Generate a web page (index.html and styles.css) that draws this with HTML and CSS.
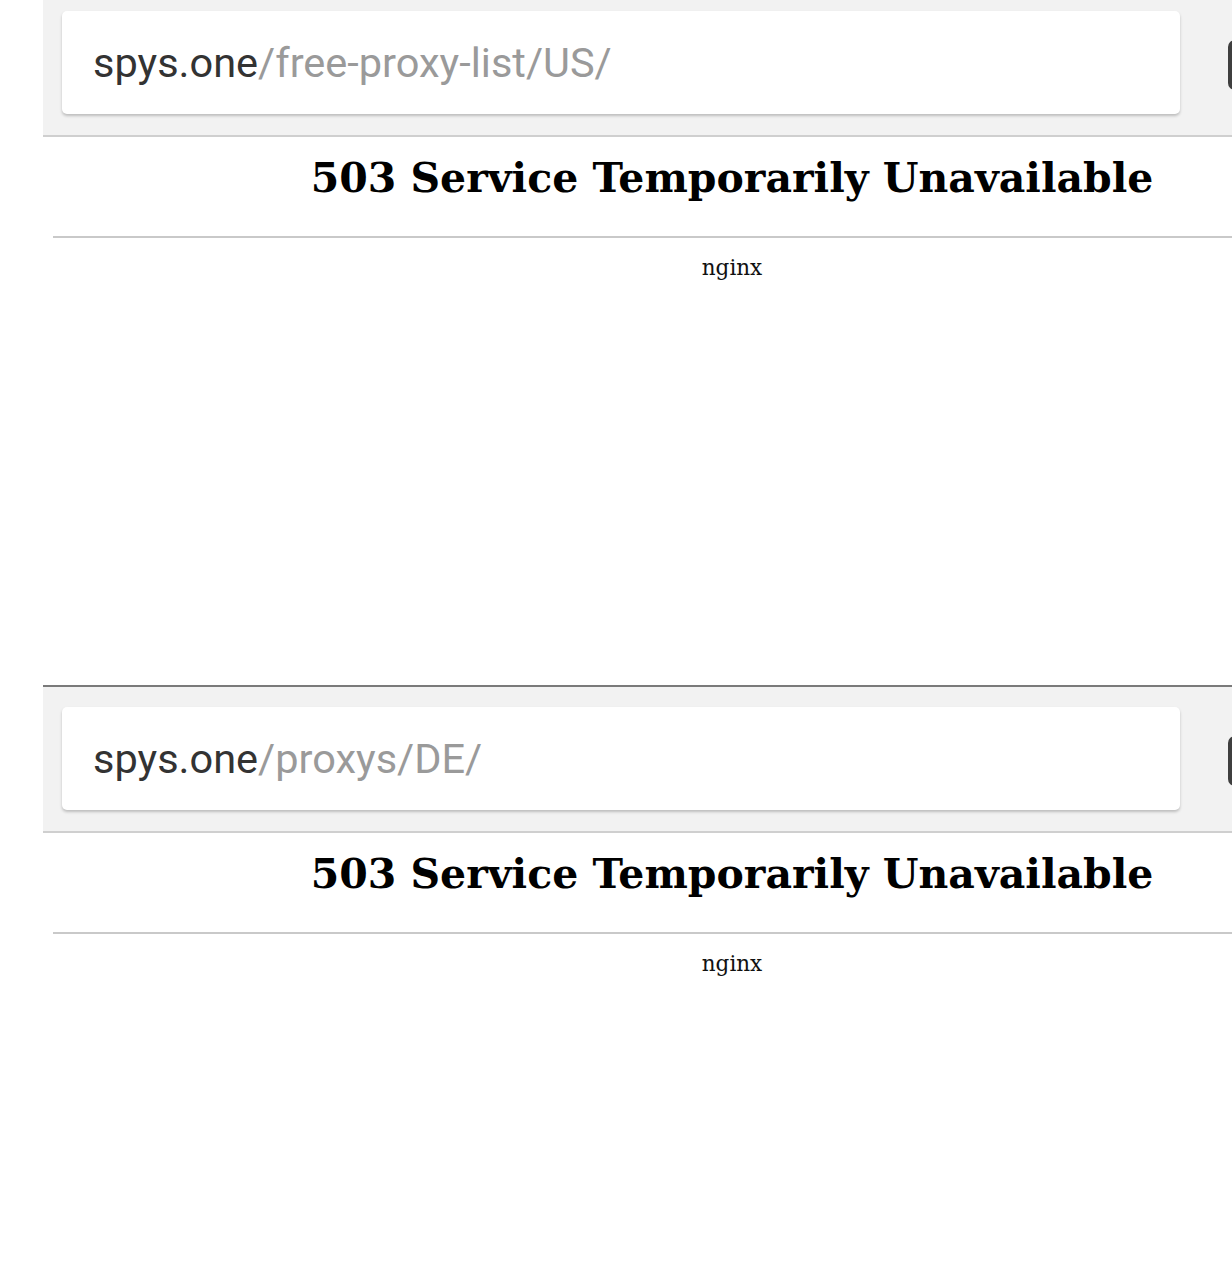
FILE: index.html
```html
<!DOCTYPE html>
<html>
<head>
<meta charset="utf-8">
<link rel="stylesheet" href="styles.css">
</head>
<body>
  <section class="shot shot-first">
    <div class="bar">
      <div class="omnibox"><span class="host">spys.one</span><span class="path">/free-proxy-list/US/</span></div>
      <div class="tabs"></div>
    </div>
    <div class="page">
      <h1 class="title">503 Service Temporarily Unavailable</h1>
      <hr class="rule">
      <p class="server">nginx</p>
    </div>
  </section>
  <section class="shot shot-second">
    <div class="bar">
      <div class="omnibox"><span class="host">spys.one</span><span class="path">/proxys/DE/</span></div>
      <div class="tabs"></div>
    </div>
    <div class="page">
      <h1 class="title">503 Service Temporarily Unavailable</h1>
      <hr class="rule">
      <p class="server">nginx</p>
    </div>
  </section>
</body>
</html>
```
FILE: styles.css
```css
html, body {
  margin: 0;
  padding: 0;
  background: #ffffff;
}

.shot {
  margin-left: 43px;
  overflow: hidden;
}

.shot-first {
  height: 685px;
}

.shot-first .bar {
  padding-top: 11px;
}

.shot-second {
  border-top: 2px solid #7a7a7a;
  height: 593px;
}

.shot-second .bar {
  padding-top: 20px;
}

.bar {
  background: #f2f2f2;
  border-bottom: 2px solid #cfcfcf;
  padding-left: 19px;
  padding-bottom: 21px;
  display: flex;
  align-items: flex-start;
  box-sizing: border-box;
  width: 1400px;
}

.omnibox {
  width: 1118px;
  height: 103px;
  background: #ffffff;
  border-radius: 5px;
  box-shadow: 0 2px 3px rgba(0, 0, 0, 0.22);
  box-sizing: border-box;
  padding-left: 31px;
  display: flex;
  align-items: center;
  font-family: Roboto, "Liberation Sans", sans-serif;
  font-size: 41.5px;
}

.host {
  color: #333333;
}

.path {
  color: #9a9a9a;
}

.tabs {
  margin-left: 48px;
  margin-top: 29px;
  width: 42px;
  height: 42px;
  border: 4px solid #3f3f3f;
  border-radius: 7px;
}

.page {
  width: 1378px;
  padding: 0 10px;
  box-sizing: border-box;
  font-family: "DejaVu Serif", "Liberation Serif", serif;
  color: #000000;
  text-align: center;
}

.title {
  margin: 14px 0 0;
  font-size: 41px;
  font-weight: bold;
  line-height: 54px;
}

.rule {
  margin: 31px 0 0;
  border: 0;
  border-top: 2px solid #c9c9c9;
  height: 0;
}

.server {
  margin: 16px 0 0;
  font-size: 21.5px;
  line-height: 28px;
  color: #111111;
}
```
